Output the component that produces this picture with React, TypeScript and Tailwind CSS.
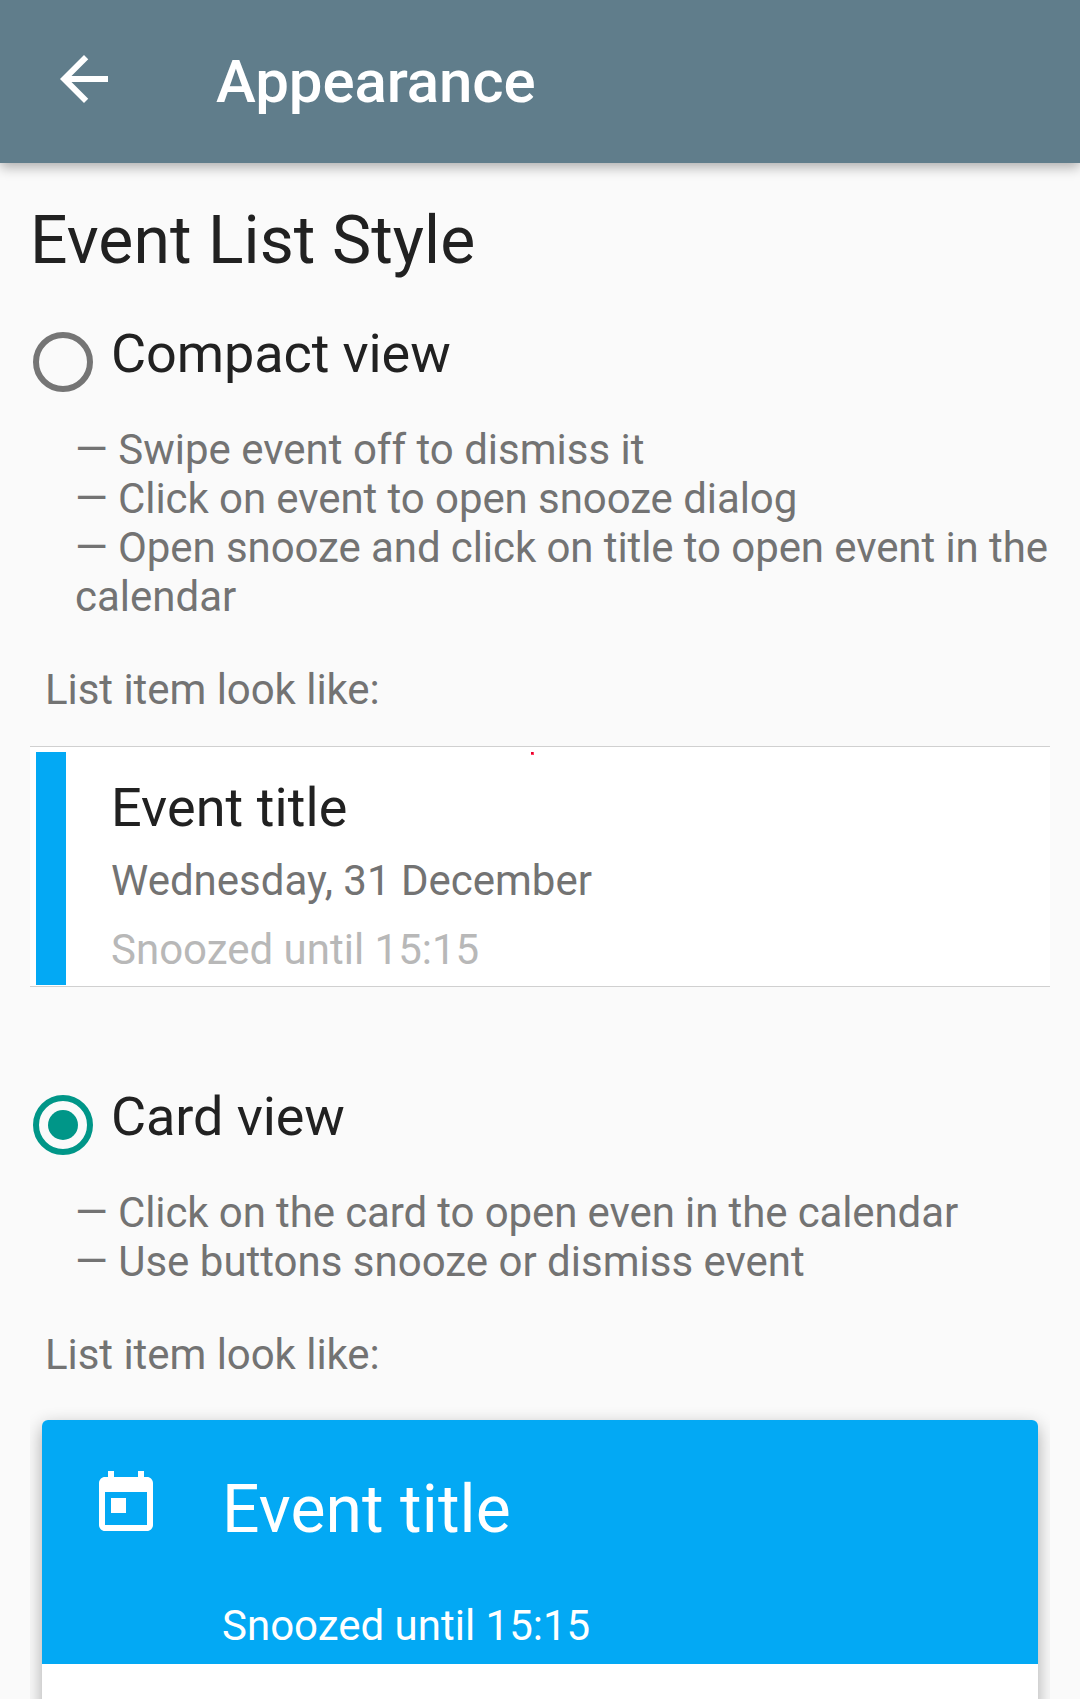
import React from "react";

function Line({ text, className }: { text: string; className: string }) {
  return <div className={"whitespace-nowrap " + className}>{text}</div>;
}

function Radio({ checked }: { checked?: boolean }) {
  return (
    <svg width="60" height="60" viewBox="0 0 60 60" className="mt-[13px] shrink-0">
      <circle cx="30" cy="30" r="27" fill="none" stroke={checked ? "#009688" : "#757575"} strokeWidth="6" />
      {checked && <circle cx="30" cy="30" r="15" fill="#009688" />}
    </svg>
  );
}

export default function App() {
  return (
    <div className="flex h-[1699px] w-[1080px] flex-col overflow-hidden bg-[#fafafa] font-[Roboto,sans-serif] text-[#212121]">
      <header className="relative flex h-[163px] shrink-0 items-center bg-[#607d8b] pl-[60px] text-white shadow-[0_4px_12px_rgba(0,0,0,0.32)]">
        <svg width="48" height="48" viewBox="4 4 16 16" fill="#fff" className="-mt-[5px]">
          <path d="M20 11H7.83l5.59-5.59L12 4l-8 8 8 8 1.41-1.41L7.83 13H20v-2z" />
        </svg>
        <h1 className="ml-[108px] text-[60px] leading-[70px] font-medium tracking-[-0.1px]">Appearance</h1>
      </header>
      <main className="flex flex-col px-[30px]">
        <Line text="Event List Style" className="mt-[39px] text-[66px] leading-[78px] tracking-[0.06px]" />
        <div className="mt-[39px] flex h-[80px]">
          <div className="w-[81px] pl-[3px]"><Radio /></div>
          <Line text="Compact view" className="text-[54px] leading-[70px] tracking-[-0.1px]" />
        </div>
        <div className="mt-[26px] pl-[45px] text-[42px] leading-[49px] text-[#737373]">
          <Line text="— Swipe event off to dismiss it" className="" />
          <Line text="— Click on event to open snooze dialog" className="tracking-[-0.08px]" />
          <Line text="— Open snooze and click on title to open event in the" className="tracking-[-0.085px]" />
          <Line text="calendar" className="" />
        </div>
        <Line text="List item look like:" className="mt-[44px] pl-[15px] text-[42px] leading-[49px] tracking-[-0.05px] text-[#737373]" />
        <section className="relative mt-[32px] flex h-[241px] border-y border-[#d0d0d0] bg-white">
          <div className="mt-[5px] ml-[6px] h-[233px] w-[30px] bg-[#03a9f4]" />
          <div className="ml-[45px] pt-[28px]">
            <Line text="Event title" className="text-[54px] leading-[66px] tracking-[0.08px]" />
            <Line text="Wednesday, 31 December" className="mt-[15px] text-[42px] leading-[49px] text-[#737373]" />
            <Line text="Snoozed until 15:15" className="mt-[20px] text-[42px] leading-[49px] text-[#b8b8b8]" />
          </div>
          <i className="absolute top-[5px] left-[501px] size-[3px] bg-[#ff4060]" />
          <i className="absolute top-[5px] left-[501px] size-[2px] bg-[#e6002e]" />
        </section>
        <div className="mt-[95px] flex h-[80px]">
          <div className="w-[81px] pl-[3px]"><Radio checked /></div>
          <Line text="Card view" className="text-[54px] leading-[70px] tracking-[-0.1px]" />
        </div>
        <div className="mt-[26px] pl-[45px] text-[42px] leading-[49px] text-[#737373]">
          <Line text="— Click on the card to open even in the calendar" className="tracking-[-0.11px]" />
          <Line text="— Use buttons snooze or dismiss event" className="" />
        </div>
        <Line text="List item look like:" className="mt-[44px] pl-[15px] text-[42px] leading-[49px] tracking-[-0.05px] text-[#737373]" />
        <div className="overflow-hidden px-[12px] pt-[41px]">
          <section className="h-[400px] rounded-[6px] bg-white shadow-[0_6px_18px_rgba(0,0,0,0.32)]">
            <div className="flex h-[244px] rounded-t-[6px] bg-[#03a9f4] text-white">
              <svg width="54" height="60" viewBox="3 1 18 20" fill="#fff" className="mt-[51px] ml-[57px]">
                <path d="M19 3h-1V1h-2v2H8V1H6v2H5c-1.11 0-1.99.9-1.99 2L3 19c0 1.1.89 2 2 2h14c1.1 0 2-.9 2-2V5c0-1.1-.9-2-2-2zm0 16H5V8h14v11zM7 10h5v5H7z" />
              </svg>
              <div className="ml-[69px] pt-[51px]">
                <Line text="Event title" className="text-[66px] leading-[78px] tracking-[0.08px]" />
                <Line text="Snoozed until 15:15" className="mt-[52px] text-[42px] leading-[49px]" />
              </div>
            </div>
          </section>
        </div>
      </main>
    </div>
  );
}
